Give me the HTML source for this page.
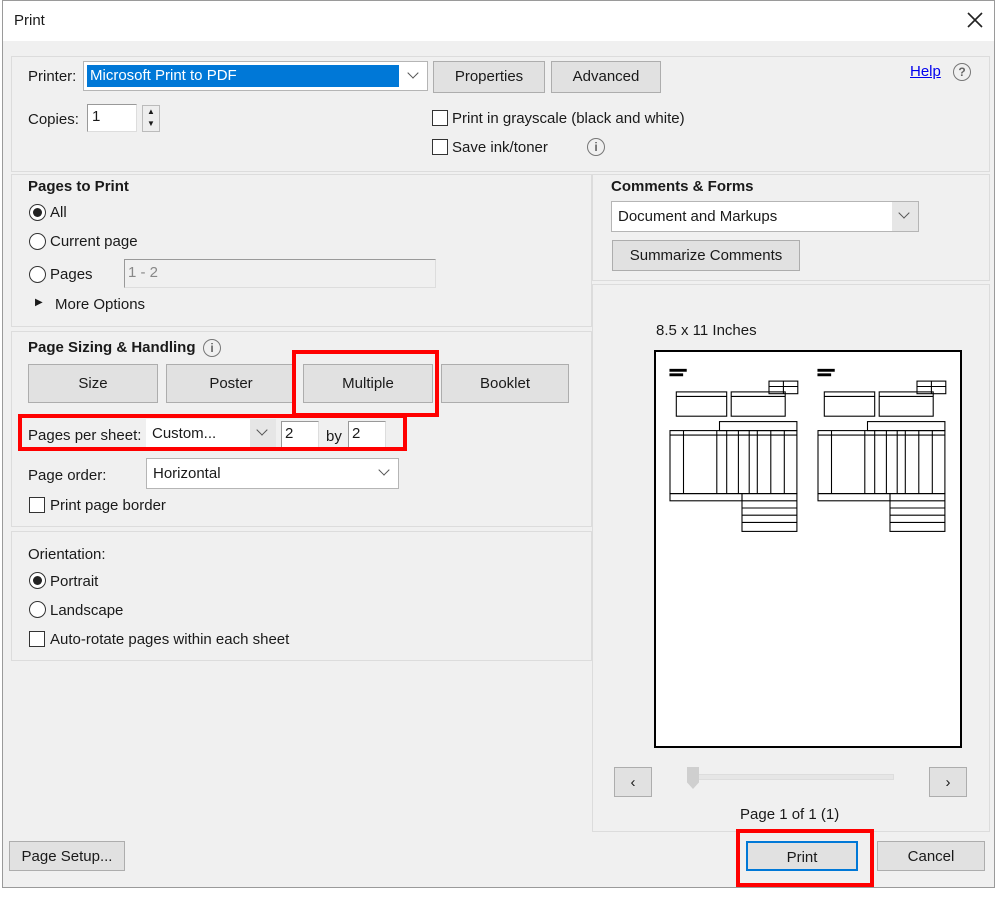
<!DOCTYPE html>
<html><head><meta charset="utf-8"><style>
*{box-sizing:border-box;margin:0;padding:0}
body{width:999px;height:897px;background:#fff;position:relative;overflow:hidden;font-family:"Liberation Sans",sans-serif;font-size:15px;color:#1a1a1a}
.a{position:absolute}
.dlg{position:absolute;left:2px;top:0;width:993px;height:888px;background:#f0f0f0;border:1px solid #9a9a9a}
.title{position:absolute;left:0;top:0;width:100%;height:40px;background:#fff}
.pnl{position:absolute;border:1px solid #dcdcdc;background:#f0f0f0}
.btn{position:absolute;background:#e1e1e1;border:1px solid #adadad;text-align:center;line-height:30px}
.sel{position:absolute;background:#fff;border:1px solid #b5b5b5}
.sel .ar{position:absolute;right:0;top:0;bottom:0;width:26px;background:#e6e6e6}
.sel .ar:after{content:"";position:absolute;left:8px;top:7px;width:7px;height:7px;border-right:1.3px solid #555;border-bottom:1.3px solid #555;transform:rotate(45deg)}
.cb{position:absolute;width:16px;height:16px;border:1px solid #333;background:#fff}
.rd{position:absolute;width:17px;height:17px;border:1px solid #333;border-radius:50%;background:#fff}
.b{font-weight:bold}
.red{position:absolute;border:4px solid #f00}
.inp{position:absolute;background:#fff;border:1px solid #999;border-right-color:#ddd;border-bottom-color:#ddd}
.info{position:absolute;width:18px;height:18px;border:1.3px solid #777;border-radius:50%;font-size:12px;text-align:center;line-height:16px;color:#666;font-weight:bold}
</style></head><body>
<div class="dlg">
<div class="title"></div>
<div class="a" style="left:11px;top:11px;font-size:15px">Print</div>
<svg class="a" style="left:964px;top:11px" width="16" height="16"><path d="M1 1L15 15M15 1L1 15" stroke="#222" stroke-width="1.6"/></svg>

<div class="pnl" style="left:8px;top:55px;width:979px;height:116px"></div>
<div class="a" style="left:25px;top:67px">Printer:</div>
<div class="sel" style="left:80px;top:60px;width:345px;height:30px"><div class="a" style="left:3px;top:3px;width:312px;height:22px;background:#0078d7;color:#fff;line-height:22px;padding-left:3px;outline:1px dotted #fff">Microsoft Print to PDF</div><div class="ar" style="background:#fff"></div></div>
<div class="btn" style="left:430px;top:60px;width:112px;height:32px">Properties</div>
<div class="btn" style="left:548px;top:60px;width:110px;height:32px">Advanced</div>
<div class="a" style="left:907px;top:62px;color:#00e;text-decoration:underline">Help</div>
<div class="info" style="left:950px;top:62px">?</div>
<div class="a" style="left:25px;top:110px">Copies:</div>
<div class="inp" style="left:84px;top:103px;width:50px;height:28px;padding:3px 4px">1</div>
<div class="a" style="left:139px;top:104px;width:18px;height:27px;border:1px solid #bbb;background:#eee;font-size:8px;text-align:center;line-height:12px">▲<br>▼</div>
<div class="cb" style="left:429px;top:109px"></div><div class="a" style="left:449px;top:109px">Print in grayscale (black and white)</div>
<div class="cb" style="left:429px;top:138px"></div><div class="a" style="left:449px;top:138px">Save ink/toner</div>
<div class="info" style="left:584px;top:137px">i</div>

<div class="pnl" style="left:8px;top:173px;width:581px;height:153px"></div>
<div class="a b" style="left:25px;top:177px">Pages to Print</div>
<div class="rd" style="left:26px;top:203px"><div class="a" style="left:3px;top:3px;width:9px;height:9px;border-radius:50%;background:#222"></div></div><div class="a" style="left:47px;top:203px">All</div>
<div class="rd" style="left:26px;top:232px"></div><div class="a" style="left:47px;top:232px">Current page</div>
<div class="rd" style="left:26px;top:265px"></div><div class="a" style="left:47px;top:265px">Pages</div>
<div class="inp" style="left:121px;top:258px;width:312px;height:29px;background:#f0f0f0;color:#888;padding:4px 3px">1 - 2</div>
<div class="a" style="left:32px;top:296px;font-size:10px">▶</div><div class="a" style="left:52px;top:295px">More Options</div>

<div class="pnl" style="left:8px;top:330px;width:581px;height:196px"></div>
<div class="a b" style="left:25px;top:338px">Page Sizing &amp; Handling</div>
<div class="info" style="left:200px;top:338px">i</div>
<div class="btn" style="left:25px;top:363px;width:130px;height:39px;line-height:37px">Size</div>
<div class="btn" style="left:163px;top:363px;width:130px;height:39px;line-height:37px">Poster</div>
<div class="btn" style="left:300px;top:363px;width:130px;height:39px;line-height:37px">Multiple</div>
<div class="btn" style="left:438px;top:363px;width:128px;height:39px;line-height:37px">Booklet</div>
<div class="red" style="left:289px;top:349px;width:147px;height:67px"></div>
<div class="a" style="left:25px;top:426px">Pages per sheet:</div>
<div class="sel" style="left:143px;top:418px;width:130px;height:29px;border:none"><div class="a" style="left:6px;top:6px">Custom...</div><div class="ar"></div></div>
<div class="inp" style="left:278px;top:420px;width:38px;height:28px;padding:3px">2</div>
<div class="a" style="left:323px;top:427px">by</div>
<div class="inp" style="left:345px;top:420px;width:38px;height:28px;padding:3px">2</div>
<div class="red" style="left:15px;top:413px;width:389px;height:37px"></div>
<div class="a" style="left:25px;top:466px">Page order:</div>
<div class="sel" style="left:143px;top:457px;width:253px;height:31px"><div class="a" style="left:6px;top:6px">Horizontal</div><div class="ar" style="background:#fff"></div></div>
<div class="cb" style="left:26px;top:496px"></div><div class="a" style="left:47px;top:496px">Print page border</div>

<div class="pnl" style="left:8px;top:530px;width:581px;height:130px"></div>
<div class="a" style="left:25px;top:545px">Orientation:</div>
<div class="rd" style="left:26px;top:571px"><div class="a" style="left:3px;top:3px;width:9px;height:9px;border-radius:50%;background:#222"></div></div><div class="a" style="left:47px;top:572px">Portrait</div>
<div class="rd" style="left:26px;top:600px"></div><div class="a" style="left:47px;top:601px">Landscape</div>
<div class="cb" style="left:26px;top:630px"></div><div class="a" style="left:47px;top:630px">Auto-rotate pages within each sheet</div>

<div class="pnl" style="left:589px;top:173px;width:398px;height:107px"></div>
<div class="a b" style="left:608px;top:177px">Comments &amp; Forms</div>
<div class="sel" style="left:608px;top:200px;width:308px;height:31px"><div class="a" style="left:6px;top:6px">Document and Markups</div><div class="ar"></div></div>
<div class="btn" style="left:609px;top:239px;width:188px;height:31px">Summarize Comments</div>

<div class="pnl" style="left:589px;top:283px;width:398px;height:548px"></div>
<div class="a" style="left:653px;top:321px">8.5 x 11 Inches</div>
<div class="a" style="left:651px;top:349px;width:308px;height:398px;background:#fff;border:2px solid #000">
<svg width="304" height="394" viewBox="0 0 304 394">
<defs><g id="inv" fill="none" stroke="#000" stroke-width="1.2">
<rect x="0" y="6" width="18" height="2" fill="#000"/><rect x="0" y="11" width="14" height="2" fill="#000"/>
<rect x="110" y="19" width="32" height="14"/><line x1="126" y1="19" x2="126" y2="33"/><line x1="110" y1="25" x2="142" y2="25"/>
<rect x="7" y="31" width="56" height="27"/><rect x="68" y="31" width="60" height="27"/><line x1="7" y1="36" x2="63" y2="36"/><line x1="68" y1="36" x2="128" y2="36"/>
<rect x="55" y="64" width="86" height="10"/><rect x="0" y="74" width="141" height="70"/><line x1="0" y1="79" x2="141" y2="79"/>
<line x1="15" y1="74" x2="15" y2="144"/><line x1="52" y1="74" x2="52" y2="144"/><line x1="63" y1="74" x2="63" y2="144"/><line x1="76" y1="74" x2="76" y2="144"/><line x1="88" y1="74" x2="88" y2="144"/><line x1="97" y1="74" x2="97" y2="144"/><line x1="112" y1="74" x2="112" y2="144"/><line x1="127" y1="74" x2="127" y2="144"/>
<rect x="0" y="144" width="80" height="8"/><rect x="80" y="144" width="61" height="42"/><line x1="80" y1="152" x2="141" y2="152"/><line x1="80" y1="160" x2="141" y2="160"/><line x1="80" y1="168" x2="141" y2="168"/><line x1="80" y1="176" x2="141" y2="176"/>
</g></defs>
<g transform="translate(14,12) scale(0.9)"><use href="#inv"/></g><g transform="translate(162,12) scale(0.9)"><use href="#inv"/></g>
</svg></div>
<div class="btn" style="left:611px;top:766px;width:38px;height:30px">‹</div>
<div class="a" style="left:686px;top:773px;width:205px;height:6px;background:#e6e6e6;border:1px solid #ddd"></div>
<div class="a" style="left:684px;top:766px;width:12px;height:22px;background:#cfcfcf;clip-path:polygon(0 0,100% 0,100% 70%,50% 100%,0 70%)"></div>
<div class="btn" style="left:926px;top:766px;width:38px;height:30px">›</div>
<div class="a" style="left:737px;top:805px">Page 1 of 1 (1)</div>

<div class="btn" style="left:6px;top:840px;width:116px;height:30px">Page Setup...</div>
<div class="btn" style="left:743px;top:840px;width:112px;height:30px;border:2px solid #0078d7">Print</div>
<div class="red" style="left:733px;top:828px;width:138px;height:58px"></div>
<div class="btn" style="left:874px;top:840px;width:108px;height:30px">Cancel</div>
</div>
</body></html>
